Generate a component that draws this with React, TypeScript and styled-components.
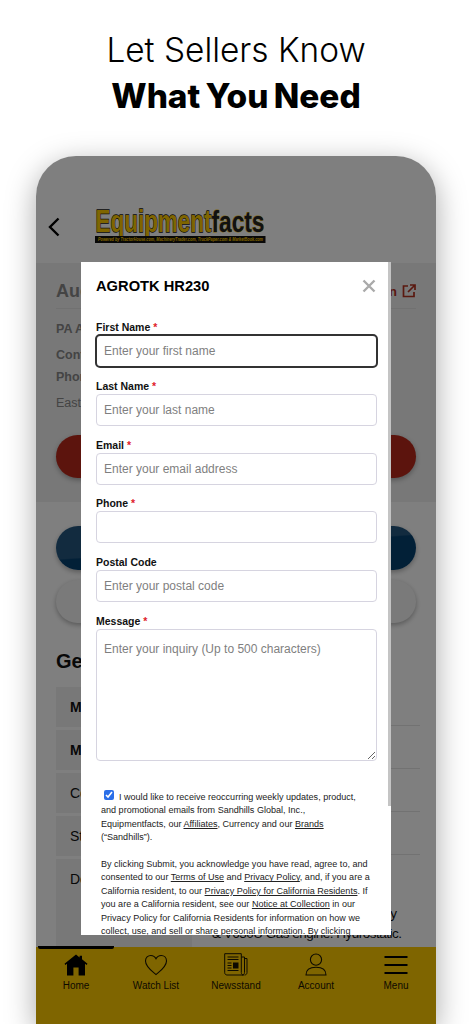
import styled, { createGlobalStyle } from "styled-components";

const GlobalStyle = createGlobalStyle`
  html, body {
    margin: 0;
    padding: 0;
    background: #fff;
    overflow: hidden;
  }
  body {
    width: 472px;
    height: 1024px;
    font-family: "Liberation Sans", Arial, sans-serif;
  }
`;

const fields = [
  { label: "First Name", required: true, placeholder: "Enter your first name", focused: true },
  { label: "Last Name", required: true, placeholder: "Enter your last name" },
  { label: "Email", required: true, placeholder: "Enter your email address" },
  { label: "Phone", required: true, placeholder: "" },
  { label: "Postal Code", required: false, placeholder: "Enter your postal code" },
];

const specs = [
  { label: "Make", value: "AGROTK", bold: true },
  { label: "Model", value: "HR230", bold: true },
  { label: "Condition", value: "New" },
  { label: "Stock Number", value: "HR230" },
];

function Logo() {
  return (
    <LogoSvg viewBox="0 0 172 36" width="172" height="36">
      <text
        x="0.5"
        y="24"
        textLength="116"
        lengthAdjust="spacingAndGlyphs"
        fontFamily="Liberation Sans"
        fontWeight="700"
        fontSize="32"
        fill="#ffcb00"
        stroke="#111"
        strokeWidth="1.3"
        paintOrder="stroke"
      >
        Equipment
      </text>
      <text
        x="116.5"
        y="24"
        textLength="53"
        lengthAdjust="spacingAndGlyphs"
        fontFamily="Liberation Sans"
        fontWeight="700"
        fontSize="30"
        fill="#222"
        stroke="#ffcb00"
        strokeWidth="0.8"
        paintOrder="stroke"
      >
        facts
      </text>
      <rect x="0" y="28" width="170.5" height="7" fill="#111" />
      <text
        x="3"
        y="33.4"
        textLength="165"
        lengthAdjust="spacingAndGlyphs"
        fontFamily="Liberation Sans"
        fontWeight="700"
        fontStyle="italic"
        fontSize="5"
        fill="#ffcb00"
      >
        Powered by TractorHouse.com, MachineryTrader.com, TruckPaper.com &amp; MarketBook.com
      </text>
    </LogoSvg>
  );
}

function HomeIcon() {
  return (
    <svg width="24" height="22" viewBox="0 0 24 22">
      <path
        d="M12 0.5 L15.6 3.4 V1.8 H18 V5.3 L23.5 9.8 L22.6 10.9 L21 9.7 V21.5 H14.6 V13.5 H9.4 V21.5 H3 V9.7 L1.4 10.9 L0.5 9.8 Z"
        fill="#000"
      />
    </svg>
  );
}

function HeartIcon() {
  return (
    <svg width="24" height="22" viewBox="0 0 24 22" fill="none" stroke="#1a1400" strokeWidth="1.1">
      <path d="M12 20.6 C8.5 17.5 1.5 13 1.5 7 C1.5 3.6 4 1.5 6.8 1.5 C9 1.5 11 2.8 12 4.8 C13 2.8 15 1.5 17.2 1.5 C20 1.5 22.5 3.6 22.5 7 C22.5 13 15.5 17.5 12 20.6 Z" />
    </svg>
  );
}

function NewsIcon() {
  return (
    <svg width="24" height="23" viewBox="0 0 24 23" fill="none" stroke="#1a1400" strokeWidth="1">
      <path d="M0.7 0.7 H17.3 V19.5 C17.3 21 18.3 22 19.5 22 H3 C1.7 22 0.7 21 0.7 19.7 Z" />
      <path d="M17.3 4 H20.5 V19.5 C20.5 21 19.5 22 18.5 22" />
      <path d="M20.5 5.5 H23 V19.5 C23 21 22 22 20.5 22" />
      <path d="M3.5 4 H14.5 M3.5 6.5 H14.5" strokeWidth="1.2" />
      <path d="M3.5 10 H7.5 M3.5 12.5 H7.5 M3.5 15 H7.5 M3.5 17.5 H14.5" strokeWidth="1" />
      <rect x="9" y="9.5" width="5.5" height="6" fill="#1a1400" stroke="none" />
    </svg>
  );
}

function AccountIcon() {
  return (
    <svg width="22" height="23" viewBox="0 0 22 23" fill="none" stroke="#1a1400" strokeWidth="1.1">
      <circle cx="11" cy="6.6" r="5.6" />
      <path d="M1 22 C1 17 5 14.3 11 14.3 C17 14.3 21 17 21 22 Z" />
    </svg>
  );
}

function MenuIcon() {
  return (
    <svg width="24" height="18" viewBox="0 0 24 18" stroke="#000" strokeWidth="2">
      <path d="M0.5 1 H23.5 M0.5 9 H23.5 M0.5 17 H23.5" />
    </svg>
  );
}

const navItems = [
  { label: "Home", icon: <HomeIcon /> },
  { label: "Watch List", icon: <HeartIcon /> },
  { label: "Newsstand", icon: <NewsIcon /> },
  { label: "Account", icon: <AccountIcon /> },
  { label: "Menu", icon: <MenuIcon /> },
];

function App() {
  return (
    <>
      <GlobalStyle />
      <Page>
        <Headline>
          Let Sellers Know
          <strong>What You Need</strong>
        </Headline>
        <Phone>
          <TopBar>
            <svg width="12" height="20" viewBox="0 0 12 20" fill="none" stroke="#000" strokeWidth="2.4">
              <path d="M10.5 1.5 L2 10 L10.5 18.5" />
            </svg>
            <Logo />
          </TopBar>

          <AuctionSection>
            <AuctionHead>
              <AuctionTitle>Auction</AuctionTitle>
              <VisitLink>
                Visit Auction
                <svg width="14" height="14" viewBox="0 0 14 14" fill="none" strokeWidth="1.7">
                  <path d="M6 2 H1.5 V12.5 H12 V8 M8 1 H13 V6 M13 1 L6 8" />
                </svg>
              </VisitLink>
            </AuctionHead>
            <InfoLine $bold $top={12}>PA Auctions</InfoLine>
            <InfoLine $bold $top={10}>Contact</InfoLine>
            <InfoLine $bold $top={6}>Phone</InfoLine>
            <InfoLine $top={10}>Eastern Pennsylvania</InfoLine>
            <Pill $tone="red" $top={24} />
          </AuctionSection>

          <Actions>
            <Pill $tone="blue" $top={24} $height={44} />
            <Pill $tone="grey" $top={10} />
            <SectionTitle>General</SectionTitle>
            <SpecTable>
              {specs.map((spec) => (
                <SpecRow key={spec.label}>
                  <SpecLabel $bold={spec.bold}>{spec.label}</SpecLabel>
                  <SpecValue>{spec.value}</SpecValue>
                </SpecRow>
              ))}
              <SpecRow>
                <SpecLabel $tall>Description</SpecLabel>
                <DescriptionText>
                  Mini skid steer loader powered by
                  <br />
                  &amp; V630U Gas engine. Hydrostatic.
                  <br />
                  4WD Loader with Front Attachments
                </DescriptionText>
              </SpecRow>
            </SpecTable>
          </Actions>

          <BottomNav>
            <ActiveBar />
            {navItems.map((item) => (
              <NavItem key={item.label}>
                <NavIcon>{item.icon}</NavIcon>
                <NavLabel>{item.label}</NavLabel>
              </NavItem>
            ))}
          </BottomNav>

          <Backdrop />

          <Modal>
            <ScrollThumb />
            <ModalHead>
              <ModalTitle>AGROTK HR230</ModalTitle>
              <svg width="14" height="14" viewBox="0 0 14 14" stroke="#aaa" strokeWidth="2.4">
                <path d="M1.5 1.5 L12.5 12.5 M12.5 1.5 L1.5 12.5" />
              </svg>
            </ModalHead>

            {fields.map((field) => (
              <Field key={field.label}>
                <FieldLabel>
                  {field.label}
                  {field.required && <Required> *</Required>}
                </FieldLabel>
                <TextInput placeholder={field.placeholder} $focused={field.focused} readOnly />
              </Field>
            ))}
            <Field>
              <FieldLabel>
                Message<Required> *</Required>
              </FieldLabel>
              <MessageInput placeholder="Enter your inquiry (Up to 500 characters)" readOnly />
            </Field>

            <Legal $top={29}>
              <OptIn type="checkbox" defaultChecked />I would like to receive reoccurring weekly updates, product,
              and promotional emails from Sandhills Global, Inc., Equipmentfacts, our <LegalLink>Affiliates</LegalLink>,
              Currency and our <LegalLink>Brands</LegalLink> (“Sandhills”).
            </Legal>
            <Legal $top={13}>
              By clicking Submit, you acknowledge you have read, agree to, and consented to our{" "}
              <LegalLink>Terms of Use</LegalLink> and <LegalLink>Privacy Policy</LegalLink>, and, if you are a
              California resident, to our <LegalLink>Privacy Policy for California Residents</LegalLink>. If you are a
              California resident, see our <LegalLink>Notice at Collection</LegalLink> in our Privacy Policy for
              California Residents for information on how we collect, use, and sell or share personal information. By
              clicking
            </Legal>
          </Modal>
        </Phone>
      </Page>
    </>
  );
}

const Page = styled.div`
  width: 472px;
  height: 1024px;
  overflow: hidden;
  display: flex;
  flex-direction: column;
  align-items: center;
  background: #fff;
`;

const Headline = styled.h1`
  margin: 0;
  padding-top: 27px;
  height: 156px;
  flex: none;
  box-sizing: border-box;
  font-family: Inter, sans-serif;
  font-size: 33.4px;
  font-weight: 300;
  line-height: 46px;
  text-align: center;
  color: #000;

  strong {
    display: block;
    font-weight: 800;
    word-spacing: -2px;
  }
`;

const Phone = styled.div`
  position: relative;
  width: 400px;
  height: 868px;
  flex: none;
  border-radius: 40px 40px 0 0;
  background: #fff;
  box-shadow: 0 8px 30px rgba(0, 0, 0, 0.35);
  overflow: hidden;
`;

const Backdrop = styled.div`
  position: absolute;
  inset: 0;
  z-index: 2;
  background: rgba(0, 0, 0, 0.5);
`;

const TopBar = styled.header`
  height: 107px;
  box-sizing: border-box;
  padding: 52px 0 0 12px;
  display: flex;
  align-items: flex-start;
  gap: 35px;

  > svg:first-child {
    margin-top: 9px;
  }
`;

const LogoSvg = styled.svg`
  display: block;
  overflow: visible;
`;

const AuctionSection = styled.section`
  background: #f0f0f0;
  padding: 18px 20px 24px;
`;

const AuctionHead = styled.div`
  display: flex;
  justify-content: space-between;
  align-items: center;
  height: 20px;
  padding-bottom: 7px;
  border-bottom: 1px solid #e2e2e2;
`;

const AuctionTitle = styled.h2`
  margin: 0;
  font-size: 18px;
  font-weight: 700;
  color: #888;
`;

const VisitLink = styled.span`
  display: flex;
  align-items: center;
  gap: 5px;
  font-size: 13px;
  font-weight: 700;
  color: #b4301f;

  svg {
    stroke: #b4301f;
  }
`;

const InfoLine = styled.div<{ $bold?: boolean; $top: number }>`
  margin-top: ${(p) => p.$top}px;
  font-size: 12.5px;
  line-height: 16px;
  font-weight: ${(p) => (p.$bold ? 700 : 400)};
  color: #888;
`;

const pillTones = {
  red: "#b8281a",
  blue: "linear-gradient(176deg, #24567e 0 48%, #05406f 50% 100%)",
  grey: "#f4f4f4",
};

const Pill = styled.div<{ $tone: keyof typeof pillTones; $top: number; $height?: number }>`
  margin-top: ${(p) => p.$top}px;
  height: ${(p) => p.$height ?? 43}px;
  border-radius: 22px;
  background: ${(p) => pillTones[p.$tone]};
  box-shadow: 0 2px 5px rgba(0, 0, 0, 0.3);
`;

const Actions = styled.section`
  padding: 0 20px;
`;

const SectionTitle = styled.h2`
  margin: 26px 0 14px;
  font-size: 20px;
  line-height: 24px;
  font-weight: 700;
  color: #111;
`;

const SpecTable = styled.div`
  width: 364px;
`;

const SpecRow = styled.div`
  display: grid;
  grid-template-columns: 136px 1fr;
  min-height: 43px;
  align-items: start;
`;

const SpecLabel = styled.div<{ $bold?: boolean; $tall?: boolean }>`
  height: ${(p) => (p.$tall ? 120 : 40)}px;
  display: flex;
  align-items: ${(p) => (p.$tall ? "flex-start" : "center")};
  padding: ${(p) => (p.$tall ? "11px" : "0")} 0 0 14px;
  box-sizing: border-box;
  background: #f0f0f0;
  font-size: 14px;
  line-height: 18px;
  font-weight: ${(p) => (p.$bold ? 700 : 400)};
  color: #111;
`;

const SpecValue = styled.div`
  height: 39px;
  box-sizing: border-box;
  padding: 11px 0 0 20px;
  border-bottom: 1px solid #e4e4e4;
  font-size: 14px;
  color: #111;
`;

const DescriptionText = styled.div`
  padding: 45px 0 0 20px;
  font-size: 13.5px;
  letter-spacing: -0.5px;
  line-height: 20px;
  white-space: nowrap;
  color: #111;
`;

const BottomNav = styled.nav`
  position: absolute;
  left: 0;
  right: 0;
  bottom: 0;
  height: 77px;
  display: grid;
  grid-template-columns: repeat(5, 1fr);
  background: #ffcb00;
`;

const ActiveBar = styled.span`
  position: absolute;
  top: -1px;
  left: 2px;
  width: 76px;
  height: 3px;
  border-radius: 0 0 2px 2px;
  background: #000;
`;

const NavItem = styled.div`
  display: flex;
  flex-direction: column;
  align-items: center;
  padding-top: 6px;
`;

const NavIcon = styled.div`
  height: 23px;
  display: flex;
  align-items: center;
  justify-content: center;
`;

const NavLabel = styled.span`
  margin-top: 3px;
  font-size: 10px;
  line-height: 14px;
  color: #1a1400;
`;

const Modal = styled.div`
  position: absolute;
  top: 106px;
  left: 45px;
  z-index: 4;
  width: 310px;
  height: 673px;
  box-sizing: border-box;
  padding: 15px 15px 0;
  overflow: hidden;
  background: #fff;
`;

const ScrollThumb = styled.span`
  position: absolute;
  top: 0;
  right: 0;
  width: 3px;
  height: 544px;
  background: #c4c4c4;
`;

const ModalHead = styled.div`
  display: flex;
  justify-content: space-between;
  align-items: center;
  height: 18px;
  margin-bottom: 24px;
`;

const ModalTitle = styled.h3`
  margin: 0;
  font-size: 14.7px;
  line-height: 18px;
  font-weight: 700;
  color: #000;
`;

const Field = styled.div`
  margin-bottom: 10.8px;
`;

const FieldLabel = styled.label`
  display: block;
  height: 16px;
  font-size: 10.5px;
  line-height: 16px;
  font-weight: 700;
  color: #111;
`;

const Required = styled.span`
  color: #e0202a;
`;

const TextInput = styled.input<{ $focused?: boolean }>`
  display: block;
  width: 281px;
  height: 32px;
  box-sizing: border-box;
  padding: 0 7px;
  border: 1px solid #d6d4e0;
  border-radius: 4px;
  outline: ${(p) => (p.$focused ? "2px solid #333" : "none")};
  outline-offset: -1px;
  background: #fff;
  font-family: "Liberation Sans", Arial, sans-serif;
  font-size: 12px;
  color: #222;

  &::placeholder {
    color: #7f7f7f;
    opacity: 1;
  }
`;

const MessageInput = styled.textarea`
  display: block;
  width: 281px;
  height: 132px;
  box-sizing: border-box;
  padding: 12px 7px;
  border: 1px solid #d6d4e0;
  border-radius: 4px;
  outline: none;
  resize: vertical;
  background: #fff;
  font-family: "Liberation Sans", Arial, sans-serif;
  font-size: 12px;

  &::placeholder {
    color: #7f7f7f;
    opacity: 1;
  }
`;

const Legal = styled.p<{ $top: number }>`
  margin: ${(p) => p.$top}px 0 0;
  padding: 0 4px 0 5px;
  font-size: 9.05px;
  line-height: 13.5px;
  color: #222;
`;

const OptIn = styled.input`
  width: 10px;
  height: 10px;
  margin: 0 5px 0 3px;
  vertical-align: 0;
  accent-color: #2b6fe8;
`;

const LegalLink = styled.a`
  color: #222;
  text-decoration: underline;
`;

export default App;
